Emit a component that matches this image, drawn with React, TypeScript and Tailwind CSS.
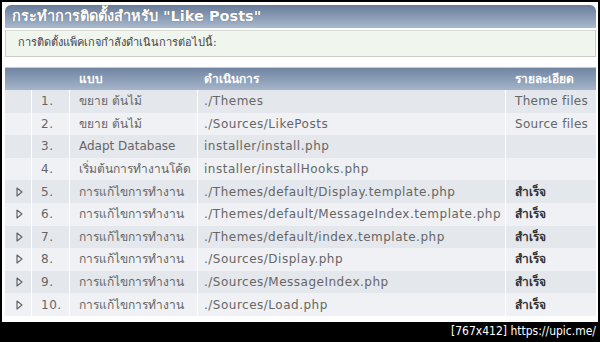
import React from "react";

const rows = [
  { n: "1.", t: "ขยาย ต้นไม้", a: "./Themes", d: "Theme files", icon: false, bold: false },
  { n: "2.", t: "ขยาย ต้นไม้", a: "./Sources/LikePosts", d: "Source files", icon: false, bold: false },
  { n: "3.", t: "Adapt Database", a: "installer/install.php", d: "", icon: false, bold: false },
  { n: "4.", t: "เริ่มต้นการทำงานโค้ด", a: "installer/installHooks.php", d: "", icon: false, bold: false },
  { n: "5.", t: "การแก้ไขการทำงาน", a: "./Themes/default/Display.template.php", d: "สำเร็จ", icon: true, bold: true },
  { n: "6.", t: "การแก้ไขการทำงาน", a: "./Themes/default/MessageIndex.template.php", d: "สำเร็จ", icon: true, bold: true },
  { n: "7.", t: "การแก้ไขการทำงาน", a: "./Themes/default/index.template.php", d: "สำเร็จ", icon: true, bold: true },
  { n: "8.", t: "การแก้ไขการทำงาน", a: "./Sources/Display.php", d: "สำเร็จ", icon: true, bold: true },
  { n: "9.", t: "การแก้ไขการทำงาน", a: "./Sources/MessageIndex.php", d: "สำเร็จ", icon: true, bold: true },
  { n: "10.", t: "การแก้ไขการทำงาน", a: "./Sources/Load.php", d: "สำเร็จ", icon: true, bold: true },
];

function Tri() {
  return (
    <svg width="7" height="10" viewBox="0 0 7 10">
      <path d="M1 1 L6 5 L1 9 Z" fill="none" stroke="#666" strokeWidth="1.2" strokeLinejoin="round" />
    </svg>
  );
}

export default function App() {
  return (
    <div
      className="w-[600px] h-[342px] bg-black relative overflow-hidden"
      style={{ fontFamily: '"DejaVu Sans", Verdana, "Noto Sans", sans-serif' }}
    >
      <div className="absolute left-[2px] top-[2px] w-[596px] h-[320px] bg-white pt-[3px] pl-[3px] pr-[2px]">
        <div className="h-[23px] rounded-t-[6px] bg-gradient-to-b from-[#687c9a] to-[#a9b9cd] flex items-center pl-[7px]">
          <span className="text-white font-bold text-[14.5px] leading-none [text-shadow:0_0_1px_#556]">
            กระทำการติดตั้งสำหรับ "Like Posts"
          </span>
        </div>
        <div className="mt-[2px] h-[27px] bg-[#f0f5ee] border border-[#c9ccc9] border-t-[#d8dcd8] flex items-center pl-[12px]">
          <span className="text-[11px] text-[#444]">การติดตั้งแพ็คเกจกำลังดำเนินการต่อไปนี้:</span>
        </div>
        <div className="mt-[10px] border-t border-[#c8ccd0]"></div>
        <div className="h-[22px] bg-gradient-to-b from-[#7185a3] to-[#a5b5c9] flex items-center text-white font-bold text-[12px]">
          <div className="w-[27px]" />
          <div className="w-[38px]" />
          <div className="w-[128px] pl-[9px]">แบบ</div>
          <div className="w-[308px] pl-[6px]">ดำเนินการ</div>
          <div className="w-[90px] pl-[9px]">รายละเอียด</div>
        </div>
        {rows.map((r, i) => (
          <div
            key={i}
            className={
              "h-[22.6px] flex items-stretch text-[12px] text-[#666] " +
              (i % 2 === 0 ? "bg-[#e4e7eb]" : "bg-[#eff1f4]")
            }
          >
            <div className="w-[27px] border-r border-white flex items-center pl-[11px]">
              {r.icon ? <Tri /> : null}
            </div>
            <div className="w-[38px] border-r border-white flex items-center pl-[9px] tracking-[0.5px]">{r.n}</div>
            <div className="w-[128px] border-r border-white flex items-center pl-[9px] whitespace-nowrap overflow-hidden">
              {r.t}
            </div>
            <div className="w-[308px] border-r border-white flex items-center pl-[6px] whitespace-nowrap overflow-hidden tracking-[0.5px]">
              {r.a}
            </div>
            <div
              className={
                "w-[90px] flex items-center pl-[9px] whitespace-nowrap overflow-hidden " +
                (r.bold ? "font-bold text-[#333]" : "tracking-[0.3px]")
              }
            >
              {r.d}
            </div>
          </div>
        ))}
      </div>
      <div className="absolute right-[4px] top-[323px] text-white text-[12px] leading-[16px] whitespace-nowrap" style={{ fontFamily: '"DejaVu Sans Condensed", "DejaVu Sans", sans-serif' }}>
        [767x412] https://upic.me/
      </div>
    </div>
  );
}
